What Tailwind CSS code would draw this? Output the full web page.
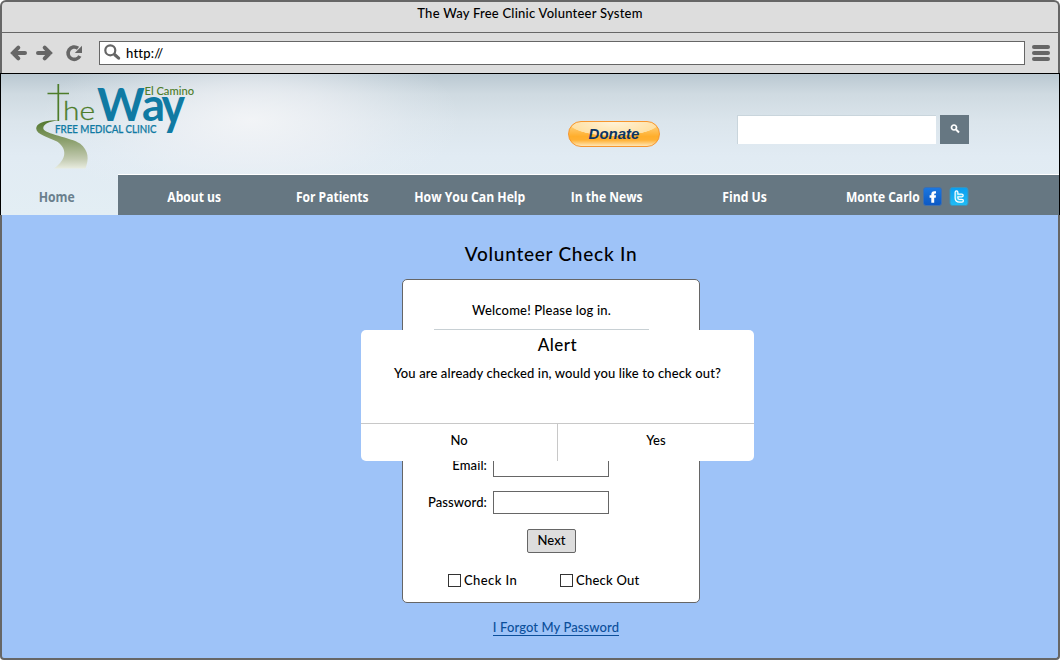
<!DOCTYPE html>
<html lang="en">
<head>
<meta charset="utf-8">
<title>The Way Free Clinic Volunteer System</title>
<script src="https://cdn.jsdelivr.net/npm/@tailwindcss/browser@4"></script>
</head>
<body class="bg-white">
<div class="relative flex h-[660px] w-[1060px] flex-col overflow-hidden font-['Lato',sans-serif] text-[13px] leading-4 font-medium text-black">

  <!-- Browser chrome -->
  <div class="h-[73px] shrink-0 rounded-t-md border-x-2 border-t-2 border-[#666] bg-[#ddd]">
    <div class="flex h-[31px] justify-center border-b border-[#666] pt-[3px]"><span class="whitespace-nowrap tracking-[0.24px]">The Way Free Clinic Volunteer System</span></div>
    <div class="flex h-[39px] items-center pl-2 pr-[5px]">
      <svg class="h-5 w-[76px] shrink-0" viewBox="0 0 76 20" fill="none" stroke="#666">
        <path d="M3 10h12M8.300 4.700L3 10l5.300 5.300" stroke-width="4" stroke-linecap="round"/>
        <path d="M28 10h12M34.700 4.700L40 10l-5.300 5.300" stroke-width="4" stroke-linecap="round"/>
        <path d="M69.800 13A6.200 6.200 0 1 1 68 5.200" stroke-width="3.600"/>
        <path d="M72 2.700v7.200h-7.200z" fill="#666" stroke="none"/>
      </svg>
      <div class="ml-[13px] flex h-6 w-[926px] shrink-0 items-center border border-[#666] bg-white pl-1">
        <svg class="h-[17px] w-[17px]" viewBox="0 0 17 17" fill="none" stroke="#666"><circle cx="6.300" cy="6.300" r="5" stroke-width="2.200"/><path d="M10.800 10.800l3.800 3.300" stroke-width="3.200" stroke-linecap="round"/></svg>
        <span class="ml-[5px] tracking-[0.2px]">http://</span>
      </div>
      <div class="ml-[7px] flex w-[18px] flex-col gap-0.5"><i class="h-1 rounded-sm bg-[#666]"></i><i class="h-1 rounded-sm bg-[#666]"></i><i class="h-1 rounded-sm bg-[#666]"></i></div>
    </div>
  </div>

  <!-- Site header -->
  <header class="flex h-[142px] shrink-0 flex-col border-x border-t border-black bg-[radial-gradient(ellipse_210px_90px_at_250px_46px,#f5f6f8e0_0%,#f0f2f6a0_40%,#ebf0f540_75%,#e8eef400_100%),linear-gradient(to_bottom,#bac8d1_0%,#cfdae1_14%,#dbe5ec_34%,#e1ebf3_58%,#e3eef4_100%)]">
    <div class="flex h-[101px] shrink-0">
      <svg class="h-[101px] w-[210px] shrink-0" viewBox="1 74 210 101">
        <defs>
          <linearGradient id="road" x1="0" y1="0" x2="0" y2="1"><stop offset="0" stop-color="#50762c"/><stop offset=".45" stop-color="#8fa271"/><stop offset=".8" stop-color="#c2cab0"/><stop offset="1" stop-color="#e8ecdf"/></linearGradient>
        </defs>
        <path d="M57.500 120.300C42 119.500 34.200 123.500 34.200 128.500C34.200 134.500 46 137 55 141.500C65 148.500 65.500 158.500 52 168.500H83.500C87 159 87 151 78 143.500C69 137.500 42 134 41.300 128.500C41 124.500 46 121.500 57.500 120.300Z" transform="translate(2 0)" fill="url(#road)"/>
        <path d="M58.300 84V121M47.500 93.500H69" stroke="#4d7c2a" stroke-width="1.700" fill="none"/>
        <g font-family="Lato, sans-serif">
          <text x="63" y="120.300" font-size="26" font-weight="300" fill="#4d7c2a" stroke="#4d7c2a" stroke-width=".3" textLength="32" lengthAdjust="spacingAndGlyphs">he</text>
          <text x="97" y="120.500" font-size="45" font-weight="700" fill="#107aa3" textLength="68" lengthAdjust="spacingAndGlyphs">Wa</text>
          <text x="161.500" y="124" font-size="51" font-weight="700" fill="#107aa3" textLength="23.500" lengthAdjust="spacingAndGlyphs">y</text>
          <text x="144.500" y="95" font-size="11" fill="#4d7c2a" textLength="49.500" lengthAdjust="spacingAndGlyphs">El Camino</text>
          <text x="55" y="133" font-size="10.800" fill="#107aa3" stroke="#107aa3" stroke-width=".25" textLength="101.500" lengthAdjust="spacingAndGlyphs">FREE MEDICAL CLINIC</text>
        </g>
      </svg>
      <button class="mt-[47px] ml-[357px] h-[26px] w-[92px] shrink-0 rounded-full border border-[#f7962e] bg-[radial-gradient(ellipse_46px_14px_at_50%_0,#fff3d9_0,#ffe0a3_97%,#ffe0a300_100%),linear-gradient(#ffd98f,#ffae2c_60%,#ffb033_75%,#ffe6b5)] font-['Liberation_Sans',sans-serif] text-[15px] leading-4 font-bold text-[#0b3563] italic">Donate</button>
      <div class="mt-[41px] ml-[77px] h-[29px] w-[199px] shrink-0 border-t border-l border-[#c9d5dc] bg-white"></div>
      <div class="mt-[41px] ml-1 flex h-[29px] w-[29px] shrink-0 items-center justify-center bg-[#667782]">
        <svg class="-mt-0.5 h-[10px] w-[10px]" viewBox="0 0 10 10" fill="none" stroke="#fff"><circle cx="4" cy="3.500" r="2.500" stroke-width="1.700"/><path d="M6 5.500l3 3" stroke-width="2"/></svg>
      </div>
    </div>
    <nav class="flex h-10 shrink-0 font-['Open_Sans','Noto_Sans',sans-serif] text-sm font-bold whitespace-nowrap text-white">
      <div class="flex w-[117px] shrink-0 items-center justify-center pt-1 pr-[6px] text-[#6a7f8d]"><span class="scale-x-[0.87]">Home</span></div>
      <div class="flex grow items-center bg-[#667782] pt-1 pl-[7px] shadow-[0_-1px_0_#fff]">
        <div class="flex w-[138px] shrink-0 justify-center"><span class="scale-x-[0.86]">About us</span></div>
        <div class="flex w-[138px] shrink-0 justify-center"><span class="scale-x-[0.86]">For Patients</span></div>
        <div class="flex w-[137px] shrink-0 justify-center"><span class="scale-x-[0.87]">How You Can Help</span></div>
        <div class="flex w-[138px] shrink-0 justify-center"><span class="scale-x-[0.86]">In the News</span></div>
        <div class="flex w-[138px] shrink-0 justify-center"><span class="scale-x-[0.87]">Find Us</span></div>
        <div class="flex w-[137px] shrink-0 justify-center"><span class="scale-x-[0.86]">Monte Carlo</span></div>
        <svg class="-mt-px -ml-7 h-5 w-[46px]" viewBox="0 0 46 20">
          <defs><linearGradient id="fb" x2="0" y2="1"><stop stop-color="#1b78e0"/><stop offset="1" stop-color="#0c58c4"/></linearGradient><linearGradient id="tw" x2="0" y2="1"><stop stop-color="#0a9df0"/><stop offset="1" stop-color="#20bdf5"/></linearGradient></defs>
          <rect x=".5" y=".5" width="18" height="18" rx="2.500" fill="url(#fb)" stroke="#3f6fae"/>
          <path d="M13 4.200H11.300Q8.300 4.200 8.300 7.400V8.300H6.600V10.800H8.300V15.800H11.200V10.800H12.700L13 8.300H11.200V7.500Q11.200 6.600 12 6.600H13Z" fill="#fff"/>
          <rect x="27" y=".5" width="18" height="18" rx="2.500" fill="url(#tw)" stroke="#3e93b8"/>
          <path d="M33.500 5.300V11Q33.500 13.700 36.500 13.700H39M34 8.400H38.800" fill="none" stroke="#fff" stroke-width="4" stroke-linecap="round" stroke-linejoin="round"/>
          <path d="M33.500 5.300V11Q33.500 13.700 36.500 13.700H39M34 8.400H38.800" fill="none" stroke="#35c5f5" stroke-width="1.500" stroke-linecap="round"/>
        </svg>
      </div>
    </nav>
  </header>

  <!-- Page -->
  <main class="flex min-h-0 grow flex-col items-center rounded-b-sm border-x-2 border-b-2 border-[#666] bg-[#9ec3f8] pl-[42px]">
    <h1 class="mt-[27px] text-[19px] leading-6 font-medium tracking-[0.75px] whitespace-nowrap">Volunteer Check In</h1>
    <form class="mt-[13px] h-[324px] w-[298px] shrink-0 rounded-[5px] border border-[#666] bg-white">
      <p class="mt-[22px] -ml-[19px] text-center tracking-[0.18px]">Welcome! Please log in.</p>
      <hr class="mt-[11px] ml-[31px] w-[215px] border-[#c8d0d4]">
      <div class="mt-[124px] flex h-[23px] items-center"><label class="w-[84px] pb-0.5 text-right tracking-[0.1px]">Email:</label><span class="ml-1.5 h-[23px] w-[116px] border border-[#666] bg-white"></span></div>
      <div class="mt-[14px] flex h-[23px] items-center"><label class="w-[84px] pb-0.5 text-right tracking-[0.1px]">Password:</label><span class="ml-1.5 h-[23px] w-[116px] border border-[#666] bg-white"></span></div>
      <button type="button" class="mt-[15px] ml-[124px] block h-6 w-[49px] rounded-xs border border-[#666] bg-[#ddd] pb-0.5 font-medium tracking-[0.1px]">Next</button>
      <div class="mt-[19px] flex items-center pl-[45px] tracking-[0.4px] whitespace-nowrap">
        <i class="h-[13px] w-[13px] border border-[#333]"></i><span class="ml-[3px] w-24">Check In</span>
        <i class="h-[13px] w-[13px] border border-[#333]"></i><span class="ml-[3px] tracking-[0.25px]">Check Out</span>
      </div>
    </form>
    <a class="mt-[17px] ml-[10px] border-b border-[#0b4f9b] leading-[15px] tracking-[0.1px] whitespace-nowrap text-[#0b4f9b]">I Forgot My Password</a>
  </main>

  <!-- Alert dialog -->
  <div class="absolute top-[330px] left-[361px] flex h-[131px] w-[393px] flex-col rounded-[5px] bg-white text-center">
    <h2 class="mt-[5px] text-[17px] leading-5 font-medium tracking-[0.5px]">Alert</h2>
    <p class="mt-[10px] tracking-[0.13px] whitespace-nowrap">You are already checked in, would you like to check out?</p>
    <div class="mt-auto flex h-[38px] border-t border-[#c8c8c8]">
      <div class="w-[197px] border-r border-[#c8c8c8] pt-2">No</div>
      <div class="grow pt-2">Yes</div>
    </div>
  </div>
</div>
</body>
</html>
